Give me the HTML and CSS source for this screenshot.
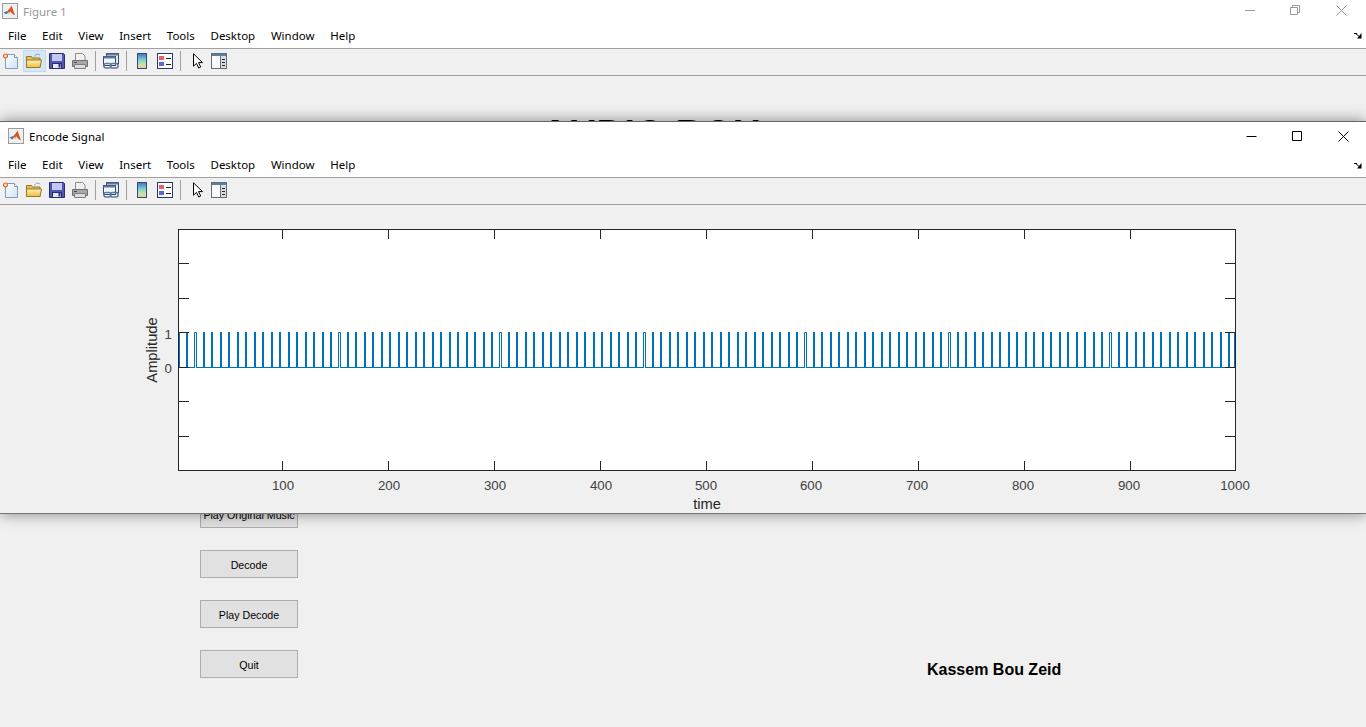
FILE: index.html
```html
<!DOCTYPE html>
<html lang="en">
  <head>
    <meta charset="UTF-8" />
    <meta name="viewport" content="width=device-width, initial-scale=1.0" />
    <title>Encode Signal</title>
    <link rel="stylesheet" href="styles.css">
  </head>
  <body>
    <!-- toolbar icons, used by both figure windows -->
    <svg class="icon-defs" width="0" height="0">
      <defs>
        <linearGradient id="cbar" x1="0" y1="0" x2="0" y2="1">
          <stop offset="0" stop-color="#4a6fc4" />
          <stop offset="0.45" stop-color="#7fd4c8" />
          <stop offset="0.75" stop-color="#c9e2a8" />
          <stop offset="1" stop-color="#f4c98a" />
        </linearGradient>
        <linearGradient id="folderfill" x1="0" y1="0" x2="0" y2="1">
          <stop offset="0" stop-color="#fff2b8" />
          <stop offset="1" stop-color="#eebc3c" />
        </linearGradient>
        <linearGradient id="paperfill" x1="0" y1="0" x2="1" y2="1">
          <stop offset="0" stop-color="#ffffff" />
          <stop offset="1" stop-color="#cfe2f4" />
        </linearGradient>
        <symbol id="i-new" viewBox="0 0 16 16">
          <path d="M2.5 1.5h9l3 3v11h-12z" fill="url(#paperfill)" stroke="#7f9dbd" />
          <path d="M11.5 1.5v3h3" fill="#fff" stroke="#7f9dbd" />
          <circle cx="2.5" cy="3" r="2" fill="#ffe2b8" stroke="#e0602c" stroke-width="1.2" />
        </symbol>
        <symbol id="i-open" viewBox="0 0 16 16">
          <path d="M8.5 3.5c1-2.5 3.500-3 5.500-1.500" fill="none" stroke="#7c9cc0" />
          <path d="M.5 3.5h5l1 1.500h7.500v9.500H.5z" fill="#e6bf55" stroke="#99772a" />
          <path d="M.5 14.5v-7.500h15l-1.500 7.500z" fill="url(#folderfill)" stroke="#99772a" />
        </symbol>
        <symbol id="i-save" viewBox="0 0 16 16">
          <path d="M.5 .5h14l1 1v14H.5z" fill="#5058b0" stroke="#262c78" />
          <rect x="3" y="1" width="10" height="7" fill="#c4c8ee" />
          <rect x="3.5" y="10.5" width="9" height="5" fill="#e6e6ee" stroke="#262c78" />
          <rect x="9.5" y="11" width="2" height="3.500" fill="#262c78" />
        </symbol>
        <symbol id="i-print" viewBox="0 0 16 16">
          <path d="M3.5 .5h7l2.500 2.500v5h-9.500z" fill="#f0f0f0" stroke="#8c8c8c" />
          <path d="M.5 7.5h15v6h-15z" fill="#a9a9a9" stroke="#6e6e6e" />
          <path d="M2.5 11.5h11v4h-11z" fill="#dcdcdc" stroke="#7c7c7c" />
          <path d="M2 9.5h3" stroke="#444" />
        </symbol>
        <symbol id="i-link" viewBox="0 0 16 16">
          <rect x="3.5" y=".5" width="12" height="10" fill="#e2e9f2" stroke="#33476c" />
          <rect x="3.5" y=".5" width="12" height="2" fill="#5f78a0" />
          <rect x=".5" y="3.5" width="12" height="9" fill="#f2f5f9" stroke="#33476c" />
          <rect x=".5" y="3.5" width="12" height="2" fill="#5f78a0" />
          <rect x="1" y="10.5" width="7" height="4.500" rx="2" fill="none" stroke="#5f7a9e" stroke-width="1.6" />
          <rect x="7.5" y="10.5" width="7.500" height="4.500" rx="2" fill="none" stroke="#5f7a9e" stroke-width="1.6" />
        </symbol>
        <symbol id="i-cbar" viewBox="0 0 16 16">
          <rect x="3.5" y=".5" width="9" height="15" fill="url(#cbar)" stroke="#2f4a80" />
        </symbol>
        <symbol id="i-legend" viewBox="0 0 16 16">
          <rect x=".5" y=".5" width="15" height="15" fill="#fdfdfd" stroke="#2a3a66" />
          <rect x="2" y="3" width="5" height="4" fill="#e0636a" />
          <rect x="2" y="9" width="5" height="4" fill="#5a68d8" />
          <path d="M9 5.5h5M9 11.5h5" stroke="#222" />
        </symbol>
        <symbol id="i-cursor" viewBox="0 0 16 16">
          <path d="M5.5 .8v12.400l3-2.800 2.200 4.600 2-1-2.200-4.400h4z" fill="#fff" stroke="#000" />
        </symbol>
        <symbol id="i-browser" viewBox="0 0 16 16">
          <rect x=".5" y=".5" width="15" height="15" fill="#fafafa" stroke="#5f6f80" />
          <rect x="1" y="1" width="14" height="2" fill="#5f7f98" />
          <rect x="9" y="3" width="6" height="12" fill="#dcdcdc" />
          <path d="M9.5 3v12" stroke="#5f6f80" />
          <path d="M11 6.5h3M11 9.5h3M11 12.5h3" stroke="#222" />
        </symbol>
        <symbol id="i-matlab" viewBox="0 0 16 16">
          <rect x=".5" y=".5" width="15" height="15" fill="#f0f0f0" stroke="#9a9a9a" />
          <path d="M1.5 9.5l3.500-1.500 1.500 1.500-2.500 2z" fill="#3f7fc0" />
          <path d="M5 8.500l3-3.500 1.500-2.500 3.500 10-2.500-1.500-2-2.500-1.500 1z" fill="#d9541e" />
          <path d="M6.500 9.500l1.500-1-1 3.500z" fill="#f09a3a" />
        </symbol>
        <symbol id="i-dock" viewBox="0 0 8 6">
          <path d="M0 .5h3M1 0l6 5" stroke="#000" fill="none" />
          <path d="M7.500 0v5.500H3z" fill="#000" />
        </symbol>
      </defs>
    </svg>

    <!-- the main GUI window, behind -->
    <div class="window back-window">
      <div class="title-bar">
        <svg class="app-icon"><use href="#i-matlab" /></svg>
        <span class="title-text">Figure 1</span>
        <div class="win-controls">
          <svg class="ctl" viewBox="0 0 12 12"><path d="M1 5.5h10" /></svg>
          <svg class="ctl" viewBox="0 0 12 12"><path d="M2.5 2.5V.5h7v7H7.5M.5 2.500h7v7h-7z" /></svg>
          <svg class="ctl" viewBox="0 0 12 12"><path d="M.5 .5l10 10M10.5 .5l-10 10" /></svg>
        </div>
      </div>
      <div class="menu-bar">
        <span>File</span><span>Edit</span><span>View</span><span>Insert</span><span>Tools</span><span>Desktop</span><span>Window</span><span>Help</span>
        <svg class="dock-arrow"><use href="#i-dock" /></svg>
      </div>
      <div class="tool-bar">
        <button class="tool" type="button"><svg><use href="#i-new" /></svg></button>
        <button class="tool tool-hover" type="button"><svg><use href="#i-open" /></svg></button>
        <button class="tool" type="button"><svg><use href="#i-save" /></svg></button>
        <button class="tool" type="button"><svg><use href="#i-print" /></svg></button>
        <span class="tool-sep"></span>
        <button class="tool" type="button"><svg><use href="#i-link" /></svg></button>
        <span class="tool-sep"></span>
        <button class="tool" type="button"><svg><use href="#i-cbar" /></svg></button>
        <button class="tool" type="button"><svg><use href="#i-legend" /></svg></button>
        <span class="tool-sep"></span>
        <button class="tool" type="button"><svg><use href="#i-cursor" /></svg></button>
        <button class="tool" type="button"><svg><use href="#i-browser" /></svg></button>
      </div>
      <div class="gui-body">
        <h1 class="gui-title">AUDIO BOU</h1>
        <div class="gui-row">
          <div class="gui-buttons">
            <button class="gui-btn" type="button">Play Original Music</button>
            <button class="gui-btn" type="button">Decode</button>
            <button class="gui-btn" type="button">Play Decode</button>
            <button class="gui-btn" type="button">Quit</button>
          </div>
          <p class="author">Kassem Bou Zeid</p>
        </div>
      </div>
    </div>

    <!-- the plot window, on top -->
    <div class="window front-window">
      <div class="title-bar">
        <svg class="app-icon"><use href="#i-matlab" /></svg>
        <span class="title-text">Encode Signal</span>
        <div class="win-controls">
          <svg class="ctl" viewBox="0 0 12 12"><path d="M.5 6.500h10" /></svg>
          <svg class="ctl" viewBox="0 0 12 12"><path d="M.5 1.500h9v9h-9z" /></svg>
          <svg class="ctl" viewBox="0 0 12 12"><path d="M.5 1.500l10 10M10.500 1.500l-10 10" /></svg>
        </div>
      </div>
      <div class="menu-bar">
        <span>File</span><span>Edit</span><span>View</span><span>Insert</span><span>Tools</span><span>Desktop</span><span>Window</span><span>Help</span>
        <svg class="dock-arrow"><use href="#i-dock" /></svg>
      </div>
      <div class="tool-bar">
        <button class="tool" type="button"><svg><use href="#i-new" /></svg></button>
        <button class="tool" type="button"><svg><use href="#i-open" /></svg></button>
        <button class="tool" type="button"><svg><use href="#i-save" /></svg></button>
        <button class="tool" type="button"><svg><use href="#i-print" /></svg></button>
        <span class="tool-sep"></span>
        <button class="tool" type="button"><svg><use href="#i-link" /></svg></button>
        <span class="tool-sep"></span>
        <button class="tool" type="button"><svg><use href="#i-cbar" /></svg></button>
        <button class="tool" type="button"><svg><use href="#i-legend" /></svg></button>
        <span class="tool-sep"></span>
        <button class="tool" type="button"><svg><use href="#i-cursor" /></svg></button>
        <button class="tool" type="button"><svg><use href="#i-browser" /></svg></button>
      </div>

      <svg class="plot" viewBox="0 205 1366 308" width="1366" height="308">
        <rect class="axes-bg" x="178.500" y="229.500" width="1057" height="241" />

        <!-- baseline, broken under the wider pulses -->
        <path class="signal-thin" d="M179 367.500H194.500M196.500 367.500H338.500M340.500 367.500H499.500M501.500 367.500H643.500M645.500 367.500H804.500M806.500 367.500H948.500M950.500 367.500H1109.500M1111.500 367.500H1235" />
        <!-- solid pulses -->
        <path class="signal" d="M187 332V368M204 332V368M212 332V368M221 332V368M229 332V368M238 332V368M246 332V368M255 332V368M263 332V368M272 332V368M280 332V368M289 332V368M297 332V368M306 332V368M314 332V368M323 332V368M331 332V368M348 332V368M356 332V368M365 332V368M373 332V368M382 332V368M390 332V368M399 332V368M407 332V368M416 332V368M424 332V368M433 332V368M441 332V368M450 332V368M458 332V368M467 332V368M475 332V368M484 332V368M492 332V368M509 332V368M517 332V368M526 332V368M534 332V368M543 332V368M551 332V368M560 332V368M568 332V368M577 332V368M585 332V368M594 332V368M602 332V368M611 332V368M619 332V368M628 332V368M636 332V368M653 332V368M661 332V368M670 332V368M678 332V368M687 332V368M695 332V368M704 332V368M712 332V368M721 332V368M729 332V368M738 332V368M746 332V368M755 332V368M763 332V368M772 332V368M780 332V368M789 332V368M797 332V368M814 332V368M822 332V368M831 332V368M839 332V368M848 332V368M856 332V368M865 332V368M873 332V368M882 332V368M890 332V368M899 332V368M907 332V368M916 332V368M924 332V368M933 332V368M941 332V368M958 332V368M966 332V368M975 332V368M983 332V368M992 332V368M1000 332V368M1009 332V368M1017 332V368M1026 332V368M1034 332V368M1043 332V368M1051 332V368M1060 332V368M1068 332V368M1077 332V368M1085 332V368M1094 332V368M1102 332V368M1119 332V368M1127 332V368M1136 332V368M1144 332V368M1153 332V368M1161 332V368M1170 332V368M1178 332V368M1187 332V368M1195 332V368M1204 332V368M1212 332V368M1221 332V368M1229 332V368" />
        <!-- wider pulses, drawn as outlines -->
        <path class="signal-thin" d="M179.500 367V332.500H186M194.500 368V332.500H196.500V368M338.500 368V332.500H340.500V368M499.500 368V332.500H501.500V368M643.500 368V332.500H645.500V368M804.500 368V332.500H806.500V368M948.500 368V332.500H950.500V368M1109.500 368V332.500H1111.500V368M1234.500 332.500V368" />

        <!-- box and ticks -->
        <rect class="axes-box" x="178.500" y="229.500" width="1057" height="241" />
        <path class="axes-box" d="M282.500 230v9M388.500 230v9M494.500 230v9M600.500 230v9M706.500 230v9M812.500 230v9M918.500 230v9M1024.500 230v9M1130.500 230v9
          M282.500 470v-9M388.500 470v-9M494.500 470v-9M600.500 470v-9M706.500 470v-9M812.500 470v-9M918.500 470v-9M1024.500 470v-9M1130.500 470v-9
          M179 263.500h10M179 298.500h10M179 332.500h10M179 367.500h10M179 401.500h10M179 436.500h10
          M1235 263.500h-10M1235 298.500h-10M1235 332.500h-10M1235 367.500h-10M1235 401.500h-10M1235 436.500h-10" />

        <text class="tick-label" x="172" y="339" text-anchor="end">1</text>
        <text class="tick-label" x="172" y="373" text-anchor="end">0</text>
        <text class="tick-label" x="283" y="490" text-anchor="middle">100</text>
        <text class="tick-label" x="389" y="490" text-anchor="middle">200</text>
        <text class="tick-label" x="495" y="490" text-anchor="middle">300</text>
        <text class="tick-label" x="601" y="490" text-anchor="middle">400</text>
        <text class="tick-label" x="706" y="490" text-anchor="middle">500</text>
        <text class="tick-label" x="811" y="490" text-anchor="middle">600</text>
        <text class="tick-label" x="917" y="490" text-anchor="middle">700</text>
        <text class="tick-label" x="1023" y="490" text-anchor="middle">800</text>
        <text class="tick-label" x="1129" y="490" text-anchor="middle">900</text>
        <text class="tick-label" x="1235" y="490" text-anchor="middle">1000</text>
        <text class="axis-label" x="707" y="509" text-anchor="middle">time</text>
        <text class="axis-label" transform="translate(157 350) rotate(-90)" text-anchor="middle">Amplitude</text>
      </svg>
    </div>
  </body>
</html>
```

FILE: styles.css
```css
/* two MATLAB figure windows, one over the other */
body {
  margin: 0;
  height: 727px;
  overflow: hidden;
  position: relative;
  background-color: #f0f0f0;
  font-family: "Noto Sans", "Liberation Sans", sans-serif;
}

.icon-defs {
  position: absolute;
}

.window {
  background-color: #f0f0f0;
}

.back-window {
  height: 727px;
}

.front-window {
  position: absolute;
  top: 121px;
  left: 0;
  right: 0;
  border-top: 1px solid #666;
  border-bottom: 1px solid #777;
  box-shadow: 0 0 14px rgba(0, 0, 0, 0.45);
}

/* title bar */
.title-bar {
  display: flex;
  align-items: center;
  background-color: #fff;
  height: 22px;
  padding-left: 2px;
}

.front-window .title-bar {
  height: 28px;
  padding: 0 0 2px 8px;
}

.app-icon {
  width: 16px;
  height: 16px;
  flex: none;
}

.title-text {
  margin-left: 5px;
  font-size: 11.5px;
  color: #000;
}

.back-window .title-text {
  color: #999;
}

.win-controls {
  margin-left: auto;
  display: flex;
  gap: 34px;
  padding-right: 18px;
}

.front-window .win-controls {
  padding-right: 16px;
}

.ctl {
  width: 12px;
  height: 12px;
  fill: none;
  stroke: #000;
  stroke-width: 1;
}

.back-window .ctl {
  stroke: #999;
}

/* menu */
.menu-bar {
  display: flex;
  align-items: center;
  gap: 15.7px;
  background-color: #fff;
  height: 26px;
  padding-left: 8px;
  border-bottom: 1px solid #a0a0a0;
  font-size: 11.5px;
  color: #000;
}

.front-window .menu-bar {
  height: 25px;
}

.dock-arrow {
  width: 8px;
  height: 6px;
  margin-left: auto;
  margin-right: 4px;
  margin-top: 2px;
}

/* toolbar */
.tool-bar {
  display: flex;
  align-items: center;
  height: 24px;
  padding-bottom: 2px;
  border-bottom: 1px solid #a0a0a0;
  background-color: #f0f0f0;
}

.tool {
  width: 23px;
  height: 22px;
  padding: 0;
  border: 1px solid transparent;
  background: none;
  display: flex;
  align-items: center;
  justify-content: center;
}

.tool svg {
  width: 16px;
  height: 16px;
  margin-left: -1px;
  flex: none;
}

.tool-hover {
  background-color: #d5e6f5;
  border-color: #c2d9ee;
}

.tool-sep {
  width: 1px;
  height: 20px;
  margin: 0 4px 0 3px;
  background-color: #a0a0a0;
}

/* GUI controls under the plot window */
.gui-body {
  display: flex;
  flex-direction: column;
}

.gui-title {
  margin: 36px 64px 0 0;
  text-align: center;
  font-family: "Liberation Sans", Arial, sans-serif;
  font-size: 38.4px;
  line-height: 44px;
  color: #000;
}

.gui-row {
  display: flex;
  align-items: flex-end;
  margin-top: 344px;
  padding-left: 200px;
}

.gui-buttons {
  display: flex;
  flex-direction: column;
  gap: 22px;
}

.gui-btn {
  width: 98px;
  height: 28px;
  padding: 2px 0 0;
  background-color: #e1e1e1;
  border: 1px solid #adadad;
  font-family: "Liberation Sans", Arial, sans-serif;
  font-size: 10.67px;
  color: #000;
  white-space: nowrap;
}

.author {
  margin: 0 0 -1px 629px;
  font-family: "Liberation Sans", Arial, sans-serif;
  font-weight: bold;
  font-size: 16px;
  line-height: 18px;
  color: #000;
}

/* plot */
.plot {
  display: block;
}

.axes-bg {
  fill: #fff;
}

.axes-box {
  fill: none;
  stroke: #262626;
  stroke-width: 1;
}

.signal {
  fill: none;
  stroke: #0072bd;
  stroke-width: 2;
}

.signal-thin {
  fill: none;
  stroke: #0072bd;
  stroke-width: 1;
}

.tick-label {
  font-family: "Liberation Sans", Arial, sans-serif;
  font-size: 13.3px;
  fill: #404040;
}

.axis-label {
  font-family: "Liberation Sans", Arial, sans-serif;
  font-size: 14.7px;
  fill: #262626;
}
```
